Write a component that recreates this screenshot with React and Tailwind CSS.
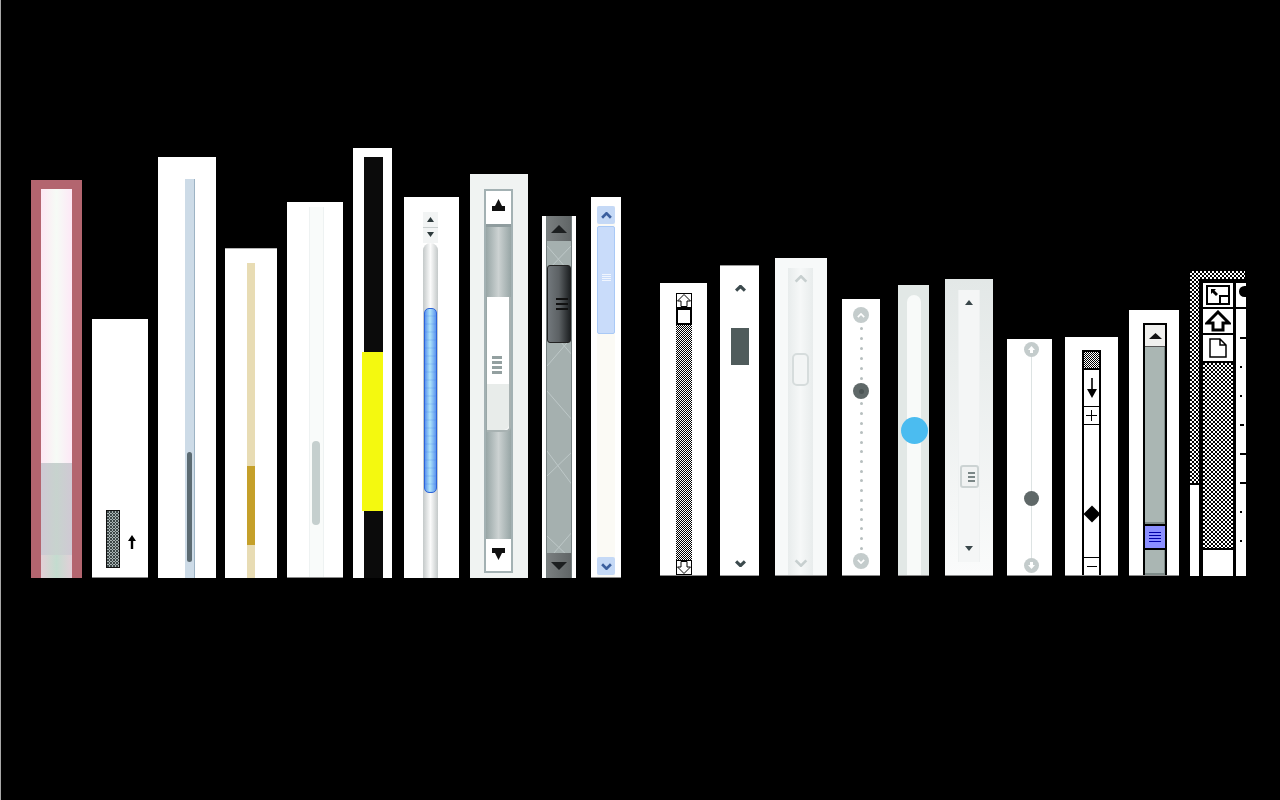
import React, { useId } from "react";

const edge = "border-b border-[#8a8a8a]";

// dither fill, the old bitmap pattern look
function Dither({ tile = 2, dot = "#000", bg = "#fff" }) {
  const id = useId();
  const half = tile / 2;
  return (
    <svg width="100%" height="100%" className="block" shapeRendering="crispEdges">
      <defs>
        <pattern id={id} width={tile} height={tile} patternUnits="userSpaceOnUse">
          <rect width={tile} height={tile} fill={bg} />
          <rect width={half} height={half} fill={dot} />
          <rect x={half} y={half} width={half} height={half} fill={dot} />
        </pattern>
      </defs>
      <rect width="100%" height="100%" fill={`url(#${id})`} />
    </svg>
  );
}

function Tri({ up = true, w = 10, h = 6, color = "#111", className = "" }) {
  return (
    <svg width={w} height={h} viewBox="0 0 10 6" preserveAspectRatio="none" className={`block shrink-0 ${className}`}>
      <path d={up ? "M5 0L10 6H0Z" : "M0 0H10L5 6Z"} fill={color} />
    </svg>
  );
}

function Eject({ up = true }) {
  return (
    <svg width="13" height="12" viewBox="0 0 13 12" className="block shrink-0">
      <path d={up ? "M6.5 0L10 7H13V12H0V7H3Z" : "M6.5 12L10 5H13V0H0V5H3Z"} fill="#111" />
    </svg>
  );
}

function Chevron({ up = true, w = 10, h = 6, color = "#3c4a4d", stroke = 2, className = "" }) {
  return (
    <svg width={w} height={h} viewBox="0 0 10 6" className={`block shrink-0 ${className}`}>
      <path d={up ? "M1 5L5 1L9 5" : "M1 1L5 5L9 1"} fill="none" stroke={color} strokeWidth={stroke} />
    </svg>
  );
}

function HollowArrow({ up = true }) {
  return (
    <svg width="14" height="13" viewBox="0 0 14 13" className="block shrink-0">
      <path
        d={up ? "M7 0.5L13.5 7H10V12.5H4V7H0.5Z" : "M7 12.5L13.5 6H10V0.5H4V6H0.5Z"}
        fill="#fff"
        stroke="#000"
        strokeWidth="1"
      />
    </svg>
  );
}

function Circle({ up }) {
  return (
    <div className="flex h-[16px] w-[16px] shrink-0 items-center justify-center rounded-full bg-[#c4cccc]">
      <Chevron up={up} w={8} h={5} color="#fff" stroke={2} />
    </div>
  );
}

function SmallCircle({ up }) {
  return (
    <div className="flex h-[15px] w-[15px] shrink-0 flex-col items-center justify-center rounded-full bg-[#c4cccc]">
      <svg width="9" height="9" viewBox="0 0 9 9" className="block">
        <path d={up ? "M4.5 1L8 5H6V8H3V5H1Z" : "M4.5 8L8 4H6V1H3V4H1Z"} fill="#fff" />
      </svg>
    </div>
  );
}

function Dots({ n, h }) {
  return (
    <div className="flex flex-col items-center justify-around" style={{ height: h }}>
      {Array.from({ length: n }).map((_, i) => (
        <div key={i} className="h-[3px] w-[3px] rounded-full bg-[#b7bfbf]" />
      ))}
    </div>
  );
}

export default function App() {
  return (
    <div className="flex h-screen w-full items-end overflow-hidden border-l border-[#a8a8a8] bg-black pb-[222px]">
      {/* first group, sits on y=578 */}
      <div className="ml-[30px] flex h-[398px] w-[51px] flex-col border-x-[10px] border-t-[9px] border-[#b3656f]">
        <div className="h-[274px] bg-gradient-to-r from-[#fde8f4] via-[#f6fbf6] to-[#fde8f6]" />
        <div className="flex-1 bg-gradient-to-r from-[#cfc9d4] via-[#c7d3ce] to-[#d0c9d4]" />
        <div className="h-[23px] bg-gradient-to-r from-[#e2cfd6] via-[#c3dccf] to-[#e2cfd8]" />
      </div>

      <div className={`ml-[10px] flex h-[259px] w-[56px] items-end bg-white pb-[9px] pl-[14px] ${edge}`}>
        <div className="h-[58px] w-[14px] border border-[#111]">
          <Dither tile={3} dot="#3c4646" bg="#a9b4b4" />
        </div>
        <svg width="10" height="14" viewBox="0 0 10 14" className="mb-[19px] ml-[7px] block">
          <path d="M5 0L9 6H6.2V14H3.8V6H1Z" fill="#000" />
        </svg>
      </div>

      <div className="ml-[10px] h-[421px] w-[58px] bg-white pl-[27px] pt-[22px]">
        <div className="h-full w-[10px] border-r border-[#9db3c4] bg-[#cddbe7] pl-[2px] pt-[273px]">
          <div className="h-[110px] w-[5px] rounded-full bg-[#5c6b72]" />
        </div>
      </div>

      <div className="ml-[9px] h-[330px] w-[52px] border-t border-[#b5b5b5] bg-white pl-[22px] pt-[14px]">
        <div className="h-full w-[8px] bg-[#e8dcb4] pt-[203px]">
          <div className="h-[79px] bg-[#c5a02a]" />
        </div>
      </div>

      <div className={`ml-[10px] h-[376px] w-[56px] bg-white pl-[22px] pt-[5px] ${edge}`}>
        <div className="h-full w-[15px] border-x border-[#eef2f2] bg-[#f9fbfa] pl-[2px] pt-[234px]">
          <div className="h-[84px] w-[8px] rounded-full bg-[#c5cfce]" />
        </div>
      </div>

      <div className="ml-[10px] h-[430px] w-[39px] bg-white pl-[11px] pt-[9px]">
        <div className="h-full w-[19px] bg-[#0b0b0b] pt-[195px]">
          <div className="-ml-[2px] h-[159px] w-[21px] bg-[#f4f90f]" />
        </div>
      </div>

      <div className="ml-[12px] h-[381px] w-[55px] bg-white pl-[19px] pt-[15px]">
        <div className="flex h-full w-[15px] flex-col">
          <div className="flex h-[31px] flex-col items-center bg-[#f2f4f4]">
            <Tri w={7} h={5} color="#2e3a3c" className="mt-[5px]" />
            <div className="mt-[5px] h-px w-full bg-[#c9cfcf]" />
            <Tri w={7} h={5} color="#2e3a3c" up={false} className="mt-[4px]" />
          </div>
          <div className="flex-1 rounded-t-[8px] bg-gradient-to-r from-[#c4c9c9] via-[#fbfbfb] to-[#c4c9c9] pl-px pt-[65px]">
            <div className="h-[185px] w-[13px] rounded-[5px] border border-[#2d63d8] bg-[image:repeating-linear-gradient(to_bottom,transparent_0,transparent_6px,rgba(60,120,230,0.12)_6px,rgba(60,120,230,0.12)_8px),linear-gradient(to_right,#5b94ee,#aee4fa_45%,#5b94ee)]" />
          </div>
        </div>
      </div>

      <div className="ml-[11px] h-[404px] w-[58px] bg-[#f0f3f2] pl-[14px] pt-[15px]">
        <div className="flex h-[384px] w-[29px] flex-col border-2 border-[#a3b1b3]">
          <div className="flex h-[33px] flex-col items-center bg-white pt-[8px]">
            <Eject />
          </div>
          <div className="flex-1 border-t-[3px] border-[#8f9c9e] bg-gradient-to-r from-[#98a6a6] via-[#ccd2d2] to-[#98a6a6] pl-px pt-[70px]">
            <div className="flex h-[135px] w-[24px] flex-col rounded-br-[5px] border-b-2 border-r-2 border-[#a8b2b2] bg-white">
              <div className="flex h-[87px] flex-col items-center justify-end gap-[2px] pb-[10px] pr-[2px]">
                <div className="h-[3px] w-[10px] bg-[#93a0a0]" />
                <div className="h-[3px] w-[10px] bg-[#93a0a0]" />
                <div className="h-[3px] w-[10px] bg-[#93a0a0]" />
                <div className="h-[3px] w-[10px] bg-[#93a0a0]" />
              </div>
              <div className="flex-1 rounded-br-[5px] bg-[#e8ecea]" />
            </div>
          </div>
          <div className="flex h-[32px] flex-col items-center bg-white pt-[9px]">
            <Eject up={false} />
          </div>
        </div>
      </div>

      <div className="ml-[14px] h-[362px] w-[34px] bg-white px-[4px]">
        <div className="relative flex h-full w-[26px] flex-col overflow-hidden border-x border-[#727c7d] bg-[#a5b0af]">
          <svg width="26" height="362" viewBox="0 0 26 362" className="absolute left-0 top-0 block">
            <path
              d="M0 30L26 60M0 55L26 28M0 110L26 140M0 150L26 120M0 175L26 205M0 260L26 235M0 235L26 270M0 320L26 345M0 345L26 315"
              stroke="#bec8c8"
              strokeWidth="1"
              fill="none"
            />
          </svg>
          <div className="relative flex h-[25px] items-center justify-center bg-gradient-to-r from-[#7a7f80] to-[#606566]">
            <Tri w={16} h={8} color="#1c1f20" />
          </div>
          <div className="relative mt-[24px] flex h-[78px] w-[24px] flex-col items-center justify-center gap-[3px] rounded-[3px] border border-[#222] bg-gradient-to-r from-[#72787c] via-[#5c6164] to-[#1f2224] pl-[6px]">
            <div className="h-[2px] w-[12px] bg-[#111]" />
            <div className="h-[2px] w-[12px] bg-[#111]" />
            <div className="h-[2px] w-[12px] bg-[#111]" />
          </div>
          <div className="relative mt-auto flex h-[25px] items-center justify-center bg-gradient-to-r from-[#7a7f80] to-[#606566]">
            <Tri w={16} h={8} color="#1c1f20" up={false} />
          </div>
        </div>
      </div>

      <div className={`ml-[15px] h-[381px] w-[30px] bg-white px-[6px] pt-[9px] ${edge}`}>
        <div className="flex h-full w-[18px] flex-col bg-[#fbfaf5]">
          <div className="flex h-[18px] items-center justify-center rounded-[2px] bg-[#c5d9f6]">
            <Chevron w={11} h={7} color="#3b5f9e" stroke={2.4} />
          </div>
          <div className="mt-[2px] flex h-[108px] flex-col items-center gap-[1px] rounded-[2px] border border-[#a9c9f6] bg-[#c9dcfa] pt-[47px]">
            <div className="h-px w-[9px] bg-[#f1f6fe]" />
            <div className="h-px w-[9px] bg-[#f1f6fe]" />
            <div className="h-px w-[9px] bg-[#f1f6fe]" />
            <div className="h-px w-[9px] bg-[#f1f6fe]" />
          </div>
          <div className="mb-[2px] mt-auto flex h-[18px] items-center justify-center rounded-[2px] bg-[#c5d9f6]">
            <Chevron up={false} w={11} h={7} color="#3b5f9e" stroke={2.4} />
          </div>
        </div>
      </div>

      {/* second group, sits on y=576 */}
      <div className={`mb-[2px] ml-[39px] h-[293px] w-[47px] bg-white pl-[16px] pt-[10px] ${edge}`}>
        <div className="flex h-full w-[16px] flex-col">
          <div className="flex h-[15px] items-center justify-center border border-black bg-white">
            <HollowArrow />
          </div>
          <div className="h-[17px] border-2 border-black bg-white" />
          <div className="min-h-0 flex-1">
            <Dither tile={2} />
          </div>
          <div className="flex h-[15px] items-center justify-center border border-black bg-white">
            <HollowArrow up={false} />
          </div>
        </div>
      </div>

      <div className={`mb-[2px] ml-[13px] flex h-[311px] w-[39px] flex-col items-center border-t border-[#9a9a9a] bg-white pb-[8px] pl-px pt-[19px] ${edge}`}>
        <Chevron w={11} h={7} color="#3c4a4d" stroke={2.8} />
        <div className="mt-[36px] h-[37px] w-[18px] bg-[#4f5b5b]" />
        <Chevron up={false} w={11} h={7} color="#3c4a4d" stroke={2.8} className="mt-auto" />
      </div>

      <div className={`mb-[2px] ml-[16px] h-[318px] w-[52px] bg-[#f7f9f9] pl-[13px] pt-[10px] ${edge}`}>
        <div className="flex h-full w-[25px] flex-col items-center bg-gradient-to-r from-[#e8ecec] via-[#f6f8f8] to-[#e8ecec] pb-[8px] pt-[7px]">
          <Chevron w={14} h={8} color="#c7cfcf" stroke={2} />
          <div className="mt-[70px] h-[33px] w-[17px] rounded-[5px] border-2 border-[#d6dcdc] bg-[#f3f5f5]" />
          <Chevron up={false} w={14} h={8} color="#c7cfcf" stroke={2} className="mt-auto" />
        </div>
      </div>

      <div className={`mb-[2px] ml-[15px] flex h-[277px] w-[38px] flex-col items-center bg-white pt-[8px] ${edge}`}>
        <Circle up />
        <Dots n={6} h={60} />
        <div className="flex h-[16px] w-[16px] shrink-0 items-center justify-center rounded-full bg-[#5f6868]">
          <div className="h-[5px] w-[5px] rounded-full bg-[#4c5555]" />
        </div>
        <Dots n={16} h={154} />
        <Circle up={false} />
      </div>

      <div className={`mb-[2px] ml-[18px] h-[291px] w-[31px] bg-[#e2e8e6] pl-[9px] pt-[10px] ${edge}`}>
        <div className="h-full w-[14px] rounded-t-[7px] bg-[#f8faf9] pt-[122px]">
          <div className="-ml-[6px] h-[27px] w-[27px] rounded-full bg-[#4bbcf0]" />
        </div>
      </div>

      <div className={`mb-[2px] ml-[16px] h-[297px] w-[48px] bg-gradient-to-b from-[#e3e8e7] to-[#fafbfb] pl-[13px] pt-[11px] ${edge}`}>
        <div className="flex h-[272px] w-[22px] flex-col items-center border-x border-[#eef1f1] bg-[#f4f6f6] pt-[10px]">
          <Tri w={8} h={5} color="#39474a" />
          <div className="mt-[160px] flex h-[23px] w-[19px] flex-col items-center justify-center gap-[2px] rounded-[3px] border-2 border-[#ccd3d3] bg-[#f0f2f2] pl-[4px]">
            <div className="h-[2px] w-[7px] bg-[#7a8686]" />
            <div className="h-[2px] w-[7px] bg-[#7a8686]" />
            <div className="h-[2px] w-[7px] bg-[#7a8686]" />
          </div>
          <Tri up={false} w={8} h={5} color="#39474a" className="mt-[58px]" />
        </div>
      </div>

      <div className={`mb-[2px] ml-[14px] flex h-[237px] w-[45px] flex-col items-center bg-white pb-[2px] pl-[3px] pt-[3px] ${edge}`}>
        <SmallCircle up />
        <div className="w-px flex-1 bg-[#dde3e3]" />
        <div className="h-[15px] w-[15px] shrink-0 rounded-full bg-[#5f6868]" />
        <div className="h-[52px] w-px bg-[#dde3e3]" />
        <SmallCircle up={false} />
      </div>

      <div className={`mb-[2px] ml-[13px] h-[239px] w-[53px] bg-white pl-[17px] pt-[13px] ${edge}`}>
        <div className="flex h-full w-[19px] flex-col border-x-2 border-black">
          <div className="h-[20px] border-y-2 border-black">
            <Dither tile={2} />
          </div>
          <div className="flex h-[36px] flex-col items-center justify-center">
            <svg width="10" height="20" viewBox="0 0 10 20" className="block">
              <path d="M4.2 0H5.8V11H10L5 20L0 11H4.2Z" fill="#000" />
            </svg>
          </div>
          <div className="flex h-[19px] items-center justify-center border-y border-black">
            <svg width="11" height="11" viewBox="0 0 11 11" className="block">
              <path d="M5.5 0V11M0 5.5H11" stroke="#000" strokeWidth="1" />
            </svg>
          </div>
          <div className="flex flex-1 items-center justify-center pt-[46px]">
            <div className="h-[12px] w-[12px] shrink-0 rotate-45 bg-black" />
          </div>
          <div className="flex h-[18px] items-center justify-center border-t border-black">
            <div className="h-px w-[10px] bg-black" />
          </div>
        </div>
      </div>

      <div className={`mb-[2px] ml-[11px] h-[266px] w-[50px] bg-white pl-[14px] pt-[13px] ${edge}`}>
        <div className="flex h-full w-[24px] flex-col border-2 border-b-0 border-black">
          <div className="flex h-[22px] items-center justify-center border-b border-[#555] bg-[#f0f0ee]">
            <Tri w={13} h={6} color="#111" />
          </div>
          <div className="flex-1 border-b-2 border-r border-[#7e8b89] bg-[#aab6b3]" />
          <div className="flex h-[26px] flex-col items-center justify-center gap-[2px] border-y-2 border-black bg-[#8b8fff]">
            <div className="h-px w-[12px] bg-[#0000a8]" />
            <div className="h-px w-[12px] bg-[#0000a8]" />
            <div className="h-px w-[12px] bg-[#0000a8]" />
            <div className="h-px w-[12px] bg-[#0000a8]" />
          </div>
          <div className="h-[25px] border-b-2 border-r border-[#7e8b89] bg-[#aab6b3]" />
        </div>
      </div>

      <div className="mb-[2px] ml-[11px] flex h-[306px] w-[56px] flex-col bg-black pt-px">
        <div className="h-[8px] w-[55px]">
          <Dither tile={4} />
        </div>
        <div className="flex min-h-0 flex-1">
          <div className="flex w-[9px] flex-col">
            <div className="h-[204px]">
              <Dither tile={4} />
            </div>
            <div className="mt-[2px] flex-1 bg-white" />
          </div>
          <div className="ml-[4px] flex w-[30px] flex-col pt-[4px]">
            <div className="flex h-[24px] items-center justify-center bg-white">
              <svg width="24" height="20" viewBox="0 0 24 20" className="block">
                <path d="M1 1H23V19H1Z" fill="none" stroke="#000" strokeWidth="2" />
                <path d="M14 19V11H23" fill="none" stroke="#000" strokeWidth="2" />
                <path d="M5 4H10L8.5 5.5L12 9L10 11L6.5 7.5L5 9Z" fill="#000" />
              </svg>
            </div>
            <div className="mt-[2px] flex h-[24px] items-center justify-center bg-white">
              <svg width="26" height="22" viewBox="0 0 26 22" className="block">
                <path d="M13 2L24 13H18V20H8V13H2Z" fill="#fff" stroke="#000" strokeWidth="3" />
              </svg>
            </div>
            <div className="mt-[2px] flex h-[26px] items-center justify-center bg-white">
              <svg width="18" height="20" viewBox="0 0 18 20" className="block">
                <path d="M1 1H11L17 7V19H1Z M11 1V7H17" fill="none" stroke="#000" strokeWidth="1.5" />
              </svg>
            </div>
            <div className="mt-[2px] h-[185px]">
              <Dither tile={4} />
            </div>
            <div className="mt-[2px] flex-1 bg-white" />
          </div>
          <div className="ml-[3px] flex w-[10px] flex-col pt-[4px]">
            <div className="h-[24px] bg-white pt-[3px]">
              <div className="ml-[3px] h-[11px] w-[7px] rounded-l-full bg-black" />
            </div>
            <div className="mt-[2px] flex flex-1 flex-col items-start gap-[27px] bg-white pl-[4px] pt-[28px]">
              <div className="h-[2px] w-[6px] bg-black" />
              <div className="h-[2px] w-[2px] bg-black" />
              <div className="h-[2px] w-[2px] bg-black" />
              <div className="h-[2px] w-[4px] bg-black" />
              <div className="h-[2px] w-[6px] bg-black" />
              <div className="h-[2px] w-[6px] bg-black" />
              <div className="h-[2px] w-[2px] bg-black" />
              <div className="h-[2px] w-[2px] bg-black" />
            </div>
          </div>
        </div>
      </div>
    </div>
  );
}
